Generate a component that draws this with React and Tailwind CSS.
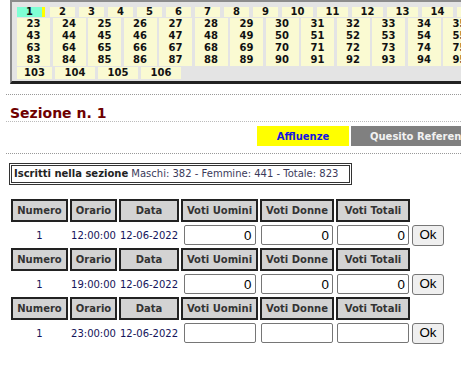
import React from "react";

const row1 = Array.from({ length: 15 }, (_, i) => i + 1);
const gridRows = [23, 43, 63, 83].map((s) => Array.from({ length: 13 }, (_, i) => s + i));
const lastRow = [103, 104, 105, 106];

function HeaderRow() {
  const heads = ["Numero", "Orario", "Data", "Voti Uomini", "Voti Donne", "Voti Totali"];
  return (
    <>
      {heads.map((h) => (
        <div
          key={h}
          className="h-[23px] border-2 border-[#222] bg-[#d3d3d3] flex items-center justify-center font-bold text-[10px] text-[#333] whitespace-nowrap"
        >
          {h}
        </div>
      ))}
      <div />
    </>
  );
}

function DataRow({ time, filled }) {
  const inputCls =
    "w-[72px] h-[20px] border border-[#767676] rounded-[2px] bg-white text-right pr-[3px] text-[13.33px] font-['Liberation_Sans',Arial,sans-serif] text-black outline-none";
  return (
    <>
      <div className="h-[22px] flex items-center justify-center text-[10px] text-[#14145a]">1</div>
      <div className="h-[22px] flex items-center justify-center text-[10px] text-[#14145a] whitespace-nowrap">{time}</div>
      <div className="h-[22px] flex items-center justify-center text-[10px] text-[#14145a] whitespace-nowrap">12-06-2022</div>
      {[0, 1, 2].map((k) => (
        <div key={k} className="h-[22px] flex items-center justify-center">
          <input className={inputCls} defaultValue={filled ? "0" : ""} readOnly />
        </div>
      ))}
      <div className="h-[22px] flex items-center">
        <button className="w-[32px] h-[21px] border border-[#767676] rounded-[3px] bg-[#efefef] text-[13.33px] font-['Liberation_Sans',Arial,sans-serif] text-black leading-none">
          Ok
        </button>
      </div>
    </>
  );
}

export default function App() {
  return (
    <div className="relative w-[461px] h-[375px] overflow-hidden bg-white font-['DejaVu_Sans',Verdana,sans-serif]">
      {/* top sections box */}
      <div className="ml-[10px] w-[520px] border-l-2 border-t-2 border-[#8c8c8c] border-b-[3px] border-b-[#222] bg-[#e4e4e4] pl-[5px] pt-[5px] pb-[2px] text-[10px] font-bold text-[#111]">
        <div className="flex h-[10px] leading-[10px]">
          {row1.map((n) => (
            <div
              key={n}
              className={
                n === 1
                  ? "w-[28px] shrink-0 mr-[5px] bg-[#7fffd4] border-r-[3px] border-[#ffff00] text-center"
                  : n < 10
                  ? "w-[25px] shrink-0 mr-[4px] bg-[#fafad2] text-center"
                  : "w-[31px] shrink-0 mr-[4px] bg-[#fafad2] text-center"
              }
            >
              {n}
            </div>
          ))}
        </div>
        <div className="mt-[1px]">
          {gridRows.map((r, i) => (
            <div key={i} className="flex gap-[2.5px] h-[12px] leading-[12px]">
              {r.map((n) => (
                <div key={n} className="w-[33px] shrink-0 bg-[#fafad2] text-center">
                  {n}
                </div>
              ))}
            </div>
          ))}
        </div>
        <div className="flex gap-[3px] h-[12px] leading-[12px] mt-[1px]">
          {lastRow.map((n) => (
            <div key={n} className={(n === 103 ? "w-[35px]" : "w-[40px]") + " bg-[#fafad2] text-center"}>
              {n}
            </div>
          ))}
        </div>
      </div>

      {/* heading area */}
      <div className="mt-[10px] ml-[6px] border-t border-dotted border-[#999]" />
      <div className="ml-[10px] pt-[10px] h-[26px] leading-[16px] text-[14px] font-bold text-[#6e0000]">
        Sezione n. 1
      </div>
      <div className="ml-[6px] border-t border-dotted border-[#bbb]" />
      <div className="mt-[4px] ml-[257px] flex h-[20px] text-[10px] font-bold whitespace-nowrap">
        <div className="w-[92px] shrink-0 bg-[#ffff00] text-[#1414e0] flex items-center justify-center">Affluenze</div>
        <div className="ml-[2px] w-[200px] shrink-0 bg-[#808080] text-[#f2f2f2] flex items-center pl-[19px]">
          Quesito Referendario
        </div>
      </div>
      <div className="mt-[7px] ml-[6px] border-t border-dotted border-[#999]" />

      {/* iscritti */}
      <div className="mt-[9px] ml-[9px] w-[343px] h-[22px] border-[3px] border-double border-[#333] pl-[2px] text-[10px] leading-[16px] whitespace-nowrap">
        <span className="font-bold text-[#222]">Iscritti nella sezione</span>
        <span className="text-[#3a3a5a]"> Maschi: 382 - Femmine: 441 - Totale: 823</span>
      </div>

      {/* table */}
      <div className="mt-[14px] ml-[11px] grid grid-cols-[57px_47px_60px_77px_74px_74px_32px] gap-[2px]">
        <HeaderRow />
        <DataRow time="12:00:00" filled />
        <HeaderRow />
        <DataRow time="19:00:00" filled />
        <HeaderRow />
        <DataRow time="23:00:00" filled={false} />
      </div>
    </div>
  );
}
